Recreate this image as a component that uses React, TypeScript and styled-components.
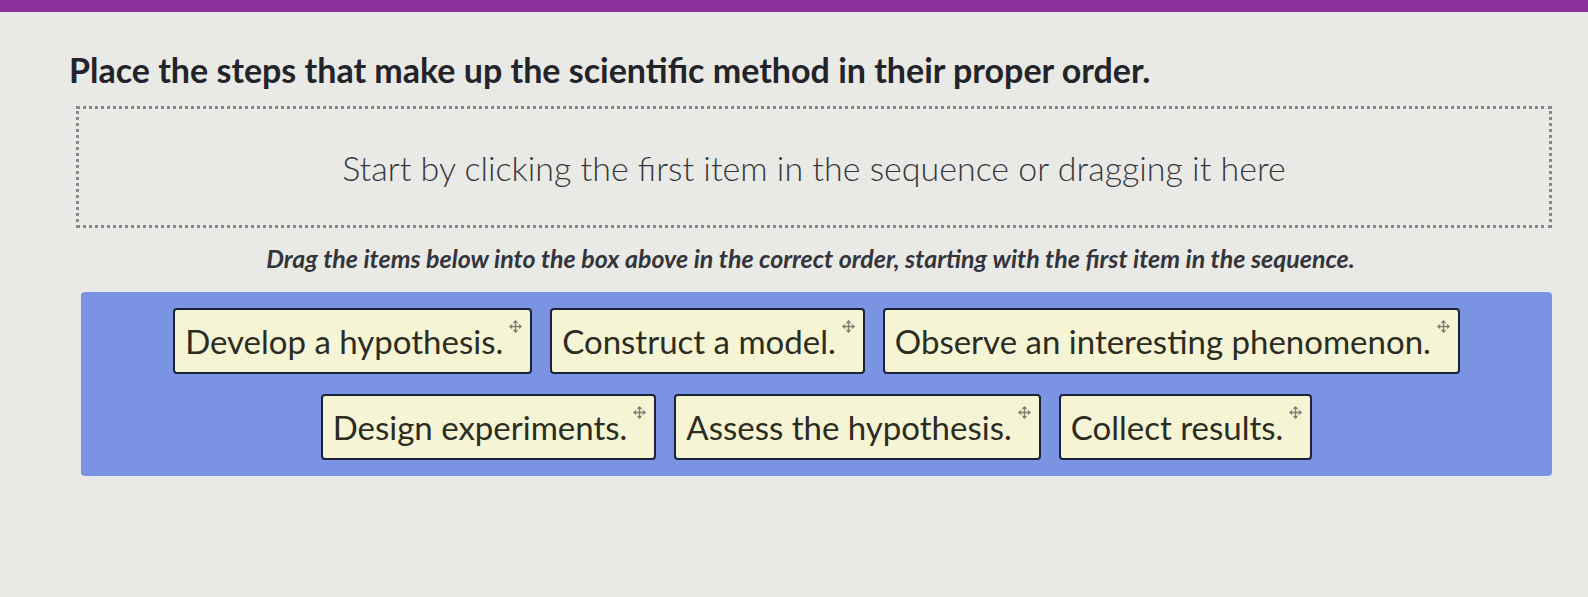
import styled, { createGlobalStyle } from 'styled-components';
import { Move } from 'lucide-react';

const GlobalStyle = createGlobalStyle`
  html, body {
    margin: 0;
    padding: 0;
    background: #e9e9e6;
  }
  body {
    font-family: Lato, "Open Sans", sans-serif;
    color: #25262b;
  }
`;

const Page = styled.div`
  width: 1588px;
  height: 597px;
  overflow: hidden;
  background: #e9e9e6;
`;

const TopBar = styled.div`
  height: 12px;
  background: #8c2f9c;
`;

const Content = styled.div`
  padding: 34px 36px 0 69px;
  display: flex;
  flex-direction: column;
`;

const Title = styled.h1`
  margin: 0;
  font-size: 34px;
  line-height: 48px;
  font-weight: 700;
  color: #23242a;
`;

const DropZone = styled.div`
  margin: 12px 0 0 7px;
  height: 116px;
  border: 3px dotted #868891;
  display: flex;
  align-items: center;
  justify-content: center;
  font-size: 34px;
  font-weight: 300;
  color: #36373d;
`;

const Hint = styled.p`
  margin: 14px 0 0;
  text-align: center;
  font-size: 25px;
  line-height: 32px;
  font-weight: 700;
  font-style: italic;
  color: #34353b;
`;

const Tray = styled.div`
  margin: 18px 0 0 12px;
  padding: 16px 20px;
  background: #7a93e3;
  border-radius: 4px;
  display: flex;
  flex-wrap: wrap;
  justify-content: center;
  gap: 20px 18px;
`;

const Item = styled.div`
  height: 66px;
  box-sizing: border-box;
  padding: 0 8px 0 10px;
  background: #f5f5d6;
  border: 2px solid #1b2236;
  border-radius: 4px;
  display: flex;
  align-items: flex-start;
  gap: 6px;
`;

const ItemText = styled.span`
  align-self: center;
  font-size: 33px;
  color: #2c2c22;
  white-space: nowrap;
`;

const Handle = styled.span`
  margin-top: 10px;
  color: #7e7e70;
  display: flex;
`;

const steps = [
  'Develop a hypothesis.',
  'Construct a model.',
  'Observe an interesting phenomenon.',
  'Design experiments.',
  'Assess the hypothesis.',
  'Collect results.',
];

export default function App() {
  return (
    <Page>
      <GlobalStyle />
      <TopBar />
      <Content>
        <Title>Place the steps that make up the scientific method in their proper order.</Title>
        <DropZone>Start by clicking the first item in the sequence or dragging it here</DropZone>
        <Hint>
          Drag the items below into the box above in the correct order, starting with the first item in the sequence.
        </Hint>
        <Tray>
          {steps.map((s) => (
            <Item key={s}>
              <ItemText>{s}</ItemText>
              <Handle>
                <Move size={13} strokeWidth={2.5} />
              </Handle>
            </Item>
          ))}
        </Tray>
      </Content>
    </Page>
  );
}
